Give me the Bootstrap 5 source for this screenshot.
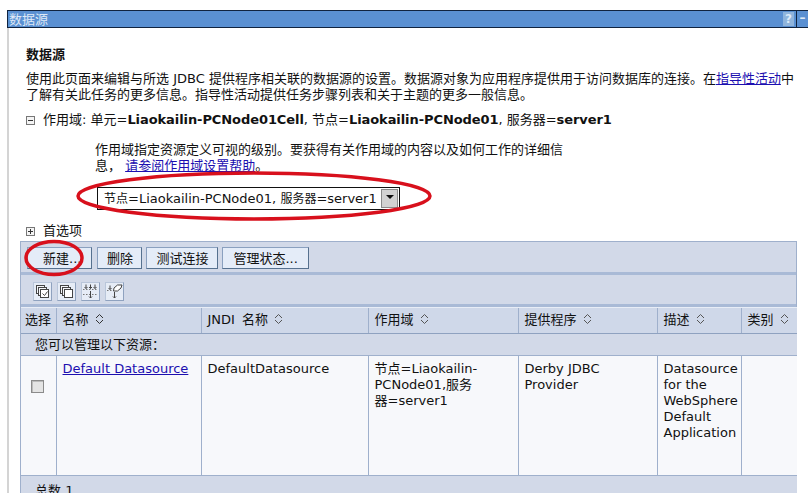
<!DOCTYPE html>
<html lang="zh">
<head>
<meta charset="utf-8">
<title>数据源</title>
<link href="https://cdn.jsdelivr.net/npm/bootstrap@5.3.0/dist/css/bootstrap.min.css" rel="stylesheet">
<style>
html,body{height:493px;overflow:hidden}
body{background:#fff;color:#111;font-family:"DejaVu Sans","Noto Sans CJK SC",sans-serif;font-size:13px;line-height:16px;position:relative}
.shell{margin:10px 0 0 7px;border-left:2px solid #d4d4d4}
.titlebar{height:18px;margin-left:-2px;background:#5a90d2;border:1px solid #10233f;border-right:0;color:#dfe9f6;line-height:17px;padding-left:1px;font-size:13px}
.tb-q{width:11px;height:14px;margin:1px 2px 0 0;background:#8fb4dc;text-align:center;font-weight:700;color:#dceaf8;font-size:12px;line-height:14px}
.tb-m{width:12px;height:16px;border-left:1px solid #10233f;text-align:center;color:#dfe9f6;font-weight:700;font-size:12px;line-height:15px}
.pagebody{padding:19px 0 0 17px}
.heading{font-size:13px;font-weight:700;line-height:16px;margin:0 0 8px}
.intro{margin:0 0 9px;line-height:16px;white-space:nowrap}
.intro a,.helptext a,.dlink{color:#1c0fb0}
.scope{height:16px;margin-bottom:14px;white-space:nowrap}
.scope b{font-weight:700;letter-spacing:-.08px}
.tree{width:9px;height:9px;border:1px solid #777;background:#f4f4f4;position:relative;display:inline-block;flex:none}
.tree:before{content:"";position:absolute;left:1px;right:1px;top:3px;height:1px;background:#333}
.tree.plus:after{content:"";position:absolute;top:1px;bottom:1px;left:3px;width:1px;background:#333}
.helptext{margin:0 0 0 69px;width:480px;line-height:16px}
.selectrow{margin:13px 0 0 71px;width:303px;height:23px;border:1px solid #111;display:flex;background:#fff}
.selectrow span{flex:1;padding:3px 0 0 6px;white-space:nowrap}
.selectrow em{font-style:normal;font-size:12px}
.dropbtn{width:17px;margin:1px;background:#d2d2d2;border:1px solid #8a8a8a;display:flex;align-items:center;justify-content:center}
.dropbtn:after{content:"";border:4px solid transparent;border-top:4px solid #111;border-bottom:0;margin-top:-3px}
.prefs{height:16px;margin-top:13px;margin-bottom:2px}
.panel{width:777px;margin-left:-6px;border:1px solid #9fb0cc;border-bottom:0;background:#d2d9e8}
.btnbar{height:33px;padding:5px 0 0 6px;border-bottom:3px solid #a9bad6;gap:4px}
.btn.tool{height:22px;padding:0 10px;border:1px solid #8aa0bf;border-right-color:#56718f;border-bottom-color:#56718f;border-radius:0;background:#e4ecf8;color:#111;font-size:13px;line-height:22px}
.btn.tool.tool-new{padding:0 10px 0 15px}
.btn.tool.tool-del{padding:0 8.500px;margin-left:1px}
.btn.tool.tool-test{padding:0 9px}
.iconbar{height:32px;padding:7px 0 0 12px;gap:5px;border-bottom:3px solid #a9bad6}
.iconbtn{width:19px;height:19px;background:#e6ecf6;border:1px solid #b9c6da;border-right-color:#8fa2bf;border-bottom-color:#8fa2bf;display:block}
.iconbtn svg{display:block}
.grid{table-layout:fixed;width:776px;margin:0;border-collapse:collapse;--bs-table-bg:transparent}
.grid>*>*>*{border:0;padding:0;box-shadow:none;color:#111}
.grid th{height:26px;background:#cfd8e9;font-weight:400;padding:0 6px 2px;border-left:1px solid #9fb0cc;border-bottom:1px solid #8fa2c0;border-top:1px solid #e8edf6;vertical-align:middle;white-space:nowrap;word-spacing:3px}
.grid th:first-child{border-left:0;padding:0 4px 2px}
.grid .inforow td{height:22px;background:#d2d9e8;padding:0 14px;border-bottom:1px solid #9fb0cc;vertical-align:middle}
.grid .datarow td{height:120px;background:#f7f8fb;vertical-align:top;padding:5px 6px;border-left:1px solid #9fb0cc;border-bottom:1px solid #9fb0cc;line-height:16px}
.grid .datarow td:first-child{border-left:0;padding:24px 0 0}
.grid .footrow td{height:30px;background:#d2d9e8;padding:7px 14px 0}
.checkbox{display:block;width:13px;height:13px;margin:0 0 0 10px;background:#e4e4e4;border:1px solid #8b8b8b;box-shadow:inset 1px 1px 0 #bbb}
.sorter{display:inline-block;vertical-align:-1px;margin-left:5px}
.annot{position:absolute;left:0;top:0;width:808px;height:493px;pointer-events:none}
</style>
</head>
<body>
<div class="shell">
  <div class="titlebar d-flex align-items-start">
    <span class="flex-grow-1">数据源</span>
    <span class="tb-q">?</span><span class="tb-m">–</span>
  </div>
  <div class="pagebody">
    <h1 class="heading">数据源</h1>
    <p class="intro">使用此页面来编辑与所选 JDBC 提供程序相关联的数据源的设置。数据源对象为应用程序提供用于访问数据库的连接。在<a href="#">指导性活动</a>中<br>了解有关此任务的更多信息。指导性活动提供任务步骤列表和关于主题的更多一般信息。</p>
    <div class="scope d-flex align-items-center gap-2"><i class="tree"></i><span>作用域: 单元=<b>Liaokailin-PCNode01Cell</b>, 节点=<b>Liaokailin-PCNode01</b>, 服务器=<b>server1</b></span></div>
    <p class="helptext">作用域指定资源定义可视的级别。要获得有关作用域的内容以及如何工作的详细信息， <a href="#">请参阅作用域设置帮助</a>。</p>
    <div class="selectrow"><span><em>节点</em>=Liaokailin-PCNode01, <em>服务器</em>=server1</span><i class="dropbtn"></i></div>
    <div class="prefs d-flex align-items-center gap-2"><i class="tree plus"></i><span>首选项</span></div>
    <div class="panel">
      <div class="btnbar d-flex">
        <button class="btn tool tool-new" type="button">新建...</button>
        <button class="btn tool tool-del" type="button">删除</button>
        <button class="btn tool tool-test" type="button">测试连接</button>
        <button class="btn tool" type="button">管理状态...</button>
      </div>
      <div class="iconbar d-flex">
        <span class="iconbtn"><svg width="17" height="17" viewBox="0 0 17 17" fill="#f4f6fa" stroke="#444"><rect x="2.500" y="2.500" width="8" height="8"/><rect x="4.500" y="4.500" width="8" height="8"/><rect x="6.500" y="6.500" width="8" height="8" fill="#fff"/><path d="M8.500 10.500l2 2 3-4" fill="none"/></svg></span>
        <span class="iconbtn"><svg width="17" height="17" viewBox="0 0 17 17" fill="#f4f6fa" stroke="#444"><rect x="2.500" y="2.500" width="8" height="8"/><rect x="4.500" y="4.500" width="8" height="8"/><rect x="6.500" y="6.500" width="8" height="8" fill="#fff"/></svg></span>
        <span class="iconbtn"><svg width="17" height="17" viewBox="0 0 17 17" fill="none" stroke="#444"><path d="M1 6.500h15M1 11.500h15" stroke-dasharray="1.500 1.500" stroke="#777"/><path d="M4 1.500v4M2.500 4l1.500 1.500L5.500 4M8.500 1.500v4M7 4l1.500 1.500L10 4M13 1.500v4M11.500 4l1.500 1.500L14.500 4M8.500 8v7M7 13.500L8.500 15 10 13.500"/></svg></span>
        <span class="iconbtn"><svg width="17" height="17" viewBox="0 0 17 17" fill="none" stroke="#444"><path d="M1 7.500h5" stroke-dasharray="1.500 1.500" stroke="#777"/><path d="M8 5l3.500-3h4.500l-1 3-3.500 3H7.500z" fill="#fff"/><path d="M4 2.500v4M2.500 5l1.500 1.500L5.500 5M8.500 9v6M7 13.500L8.500 15 10 13.500"/></svg></span>
      </div>
      <table class="table grid">
        <colgroup><col style="width:35px"><col style="width:145px"><col style="width:167px"><col style="width:150px"><col style="width:139px"><col style="width:84px"><col style="width:56px"></colgroup>
        <thead><tr>
          <th>选择</th>
          <th>名称<svg class="sorter" width="11" height="12" viewBox="0 0 11 12" fill="none" stroke="#333"><path d="M2 5l3.500-3.500L9 5M2 7l3.500 3.500L9 7"/></svg></th>
          <th>JNDI 名称<svg class="sorter" width="11" height="12" viewBox="0 0 11 12" fill="none" stroke="#555"><path d="M2 5l3.500-3.500L9 5M2 7l3.500 3.500L9 7"/></svg></th>
          <th>作用域<svg class="sorter" width="11" height="12" viewBox="0 0 11 12" fill="none" stroke="#555"><path d="M2 5l3.500-3.500L9 5M2 7l3.500 3.500L9 7"/></svg></th>
          <th>提供程序<svg class="sorter" width="11" height="12" viewBox="0 0 11 12" fill="none" stroke="#555"><path d="M2 5l3.500-3.500L9 5M2 7l3.500 3.500L9 7"/></svg></th>
          <th>描述<svg class="sorter" width="11" height="12" viewBox="0 0 11 12" fill="none" stroke="#555"><path d="M2 5l3.500-3.500L9 5M2 7l3.500 3.500L9 7"/></svg></th>
          <th>类别<svg class="sorter" width="11" height="12" viewBox="0 0 11 12" fill="none" stroke="#555"><path d="M2 5l3.500-3.500L9 5M2 7l3.500 3.500L9 7"/></svg></th>
        </tr></thead>
        <tbody>
          <tr class="inforow"><td colspan="7">您可以管理以下资源：</td></tr>
          <tr class="datarow">
            <td><i class="checkbox"></i></td>
            <td><a class="dlink" href="#">Default Datasource</a></td>
            <td>DefaultDatasource</td>
            <td>节点=Liaokailin-<br>PCNode01,服务<br>器=server1</td>
            <td>Derby JDBC Provider</td>
            <td>Datasource for the WebSphere Default Application</td>
            <td></td>
          </tr>
          <tr class="footrow"><td colspan="7">总数 1</td></tr>
        </tbody>
      </table>
    </div>
  </div>
</div>
<svg class="annot" viewBox="0 0 808 493" fill="none" stroke="#d8101c" stroke-width="3.500">
  <ellipse cx="254" cy="196" rx="176" ry="23"/>
  <ellipse cx="54" cy="258" rx="28" ry="16.500"/>
</svg>
</body>
</html>
